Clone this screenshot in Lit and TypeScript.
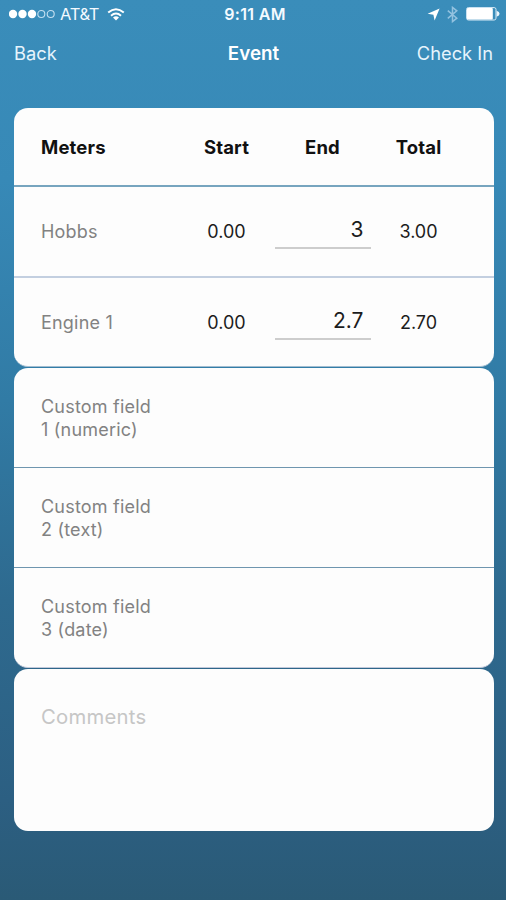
import { LitElement, html, css, svg } from "lit";
import { customElement, property } from "lit/decorators.js";

const meters = [
  { name: "Hobbs", start: "0.00", end: "3", total: "3.00" },
  { name: "Engine 1", start: "0.00", end: "2.7", total: "2.70" },
];

const customFields = [
  ["Custom field", "1 (numeric)"],
  ["Custom field", "2 (text)"],
  ["Custom field", "3 (date)"],
];

@customElement("status-bar")
class StatusBar extends LitElement {
  static styles = css`
    :host {
      display: grid;
      grid-template-columns: 1fr auto 1fr;
      align-items: center;
      height: 28px;
      padding: 0 6px 0 9px;
      color: #f4faff;
      font-size: 16px;
    }
    .left,
    .right {
      display: flex;
      align-items: center;
    }
    .right {
      justify-content: flex-end;
    }
    .carrier {
      margin: 0 8px 0 5px;
      font-size: 16.5px;
      letter-spacing: -0.35px;
    }
    .time {
      padding-left: 1px;
      font-weight: 600;
      letter-spacing: 0.3px;
    }
    .bluetooth {
      margin: 0 8px 0 7px;
    }
    svg {
      display: block;
    }
  `;
  render() {
    return html`
      <div class="left">
        <svg width="46" height="10" viewBox="0 0 46 10">
          ${[4, 13.5, 23].map((x) => svg`<circle cx=${x} cy="5" r="4.2" fill="#fff" />`)}
          ${[32.3, 41.7].map(
            (x) => svg`<circle cx=${x} cy="5" r="3.5" fill="none" stroke="#c4e0f1" stroke-width="1.1" />`
          )}
        </svg>
        <span class="carrier">AT&amp;T</span>
        <svg width="18" height="13" viewBox="0 0 18 13" fill="none" stroke="#fff" stroke-width="2">
          <path d="M1.2 4.6Q9 -2 16.8 4.6" />
          <path d="M4 7.7Q9 3.4 14 7.7" />
          <path d="M9 12.4L6 9.5Q9 7.2 12 9.5Z" fill="#fff" stroke="none" />
        </svg>
      </div>
      <span class="time">9:11 AM</span>
      <div class="right">
        <svg width="13" height="13" viewBox="0 0 13 13">
          <path d="M12.6 0.4L7.6 12.4L6.4 6.8L0.6 5.8Z" fill="#fff" />
        </svg>
        <svg class="bluetooth" width="11" height="17" viewBox="0 0 11 17" fill="none" stroke="#93c2e0" stroke-width="1.5">
          <path d="M0.8 4.6L9.8 12.2L5.5 15.6V1.4L9.8 4.8L0.8 12.4" />
        </svg>
        <svg width="34" height="14" viewBox="0 0 34 14">
          <rect x="0.6" y="0.6" width="29.4" height="12.4" rx="1.8" fill="none" stroke="#d9ebf7" stroke-width="1" />
          <rect x="1" y="1" width="25.8" height="11.6" rx="1" fill="#fff" />
          <path d="M30.6 3.8Q33.6 5 33.6 6.8Q33.6 8.6 30.6 9.8Z" fill="#e8f4fb" />
        </svg>
      </div>
    `;
  }
}

@customElement("nav-bar")
class NavBar extends LitElement {
  @property() heading = "";
  static styles = css`
    :host {
      display: grid;
      grid-template-columns: 1fr auto 1fr;
      align-items: center;
      height: 50px;
      padding: 0 13px 0 14px;
      color: #e6f4fd;
      font-size: 18.3px;
    }
    .title {
      font-weight: 600;
      font-size: 18.8px;
      color: #fff;
    }
    .action {
      text-align: right;
    }
  `;
  render() {
    return html`
      <span class="back">Back</span>
      <span class="title">${this.heading}</span>
      <span class="action">Check In</span>
    `;
  }
}

@customElement("app-root")
class AppRoot extends LitElement {
  static styles = css`
    :host {
      display: flex;
      flex-direction: column;
      box-sizing: border-box;
      height: 900px;
      overflow: hidden;
      background: linear-gradient(#3a8dba 0, #3789b7 180px, #317ba5 400px, #2e6a8f 600px, #2c5f82 800px, #2a5a76 900px);
      font-family: Inter, "Liberation Sans", sans-serif;
      font-size: 18px;
      color: #1c1c1c;
    }
    main {
      display: flex;
      flex-direction: column;
      gap: 1px;
      margin: 30px 12.5px 0 13.5px;
    }
    .card {
      display: flex;
      flex-direction: column;
      box-sizing: border-box;
      background: #fdfdfd;
      border-radius: 14px;
      overflow: hidden;
    }
    .meters {
      height: 259px;
      border-bottom: 1px solid #a3bdd0;
    }
    .row {
      display: grid;
      grid-template-columns: 1fr 96px 96px 96px;
      align-items: center;
      box-sizing: border-box;
      height: 90.5px;
      padding: 1px 27px 0 27.5px;
      text-align: center;
    }
    .row + .row {
      border-top: 2px solid #c3cfe0;
    }
    .head + .row {
      border-top: 2px solid #77a5bf;
    }
    .head {
      height: 77px;
      font-weight: 700;
      font-size: 18.5px;
      letter-spacing: 0.15px;
      color: #111;
    }
    .name {
      text-align: left;
    }
    .label {
      text-align: left;
      letter-spacing: 0.2px;
      color: #828282;
    }
    .entry {
      box-sizing: border-box;
      height: 35px;
      line-height: 31px;
      padding-right: 7px;
      border-bottom: 2px solid #cdcdcd;
      text-align: right;
      font-size: 21px;
    }
    .custom {
      height: 300px;
      border-bottom: 1px solid #c3c9da;
    }
    .field {
      display: flex;
      flex: 1;
      flex-direction: column;
      justify-content: center;
      padding: 1px 0 0 27.5px;
      line-height: 23px;
      letter-spacing: 0.2px;
      color: #828282;
    }
    .field + .field {
      border-top: 1.5px solid #6f96af;
    }
    .comments {
      height: 162px;
      padding: 33.5px 27.5px;
      font-size: 20.3px;
      letter-spacing: 0.25px;
      line-height: 28px;
      color: #c6c6c6;
    }
  `;
  render() {
    return html`
      <status-bar></status-bar>
      <nav-bar heading="Event"></nav-bar>
      <main>
        <section class="card meters">
          <div class="row head">
            <span class="name">Meters</span><span>Start</span><span>End</span><span>Total</span>
          </div>
          ${meters.map(
            (m) => html`<div class="row">
              <span class="label">${m.name}</span>
              <span>${m.start}</span>
              <span class="entry">${m.end}</span>
              <span>${m.total}</span>
            </div>`
          )}
        </section>
        <section class="card custom">
          ${customFields.map((lines) => html`<div class="field">${lines.map((l) => html`<span>${l}</span>`)}</div>`)}
        </section>
        <section class="card comments">Comments</section>
      </main>
    `;
  }
}
